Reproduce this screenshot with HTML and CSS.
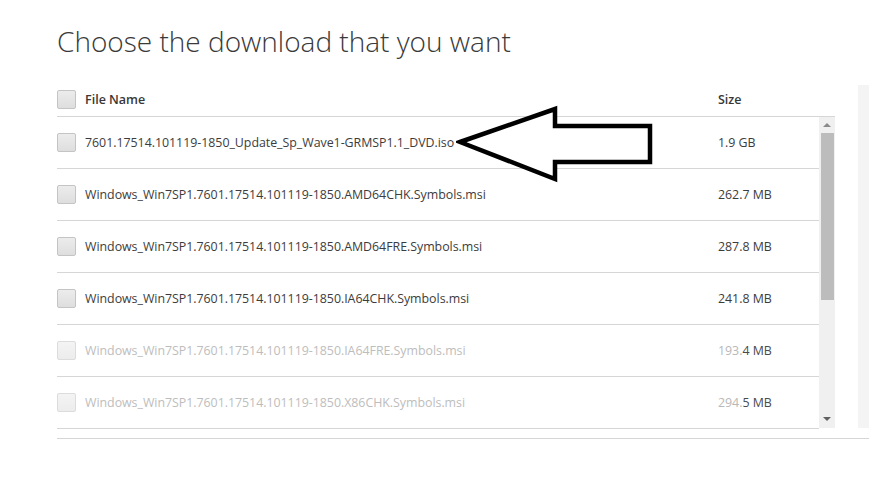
FILE: index.html
```html
<!DOCTYPE html>
<html lang="en">
<head>
<meta charset="utf-8">
<title>Choose the download that you want</title>
<link rel="stylesheet" href="styles.css">
</head>
<body>
<div class="page">
  <h1 class="title">Choose the download that you want</h1>
  <div class="body-row">
    <div class="table">
      <div class="head">
        <div class="cell-name"><span class="box"></span><span class="label">File Name</span></div>
        <div class="cell-size"><span class="label">Size</span></div>
      </div>
      <div class="list">
        <div class="rows">
          <div class="row"><div class="cell-name"><span class="box"></span><span>7601.17514.101119-1850_Update_Sp_Wave1-GRMSP1.1_DVD.iso</span></div><div class="cell-size">1.9 GB</div></div>
          <div class="row"><div class="cell-name"><span class="box"></span><span>Windows_Win7SP1.7601.17514.101119-1850.AMD64CHK.Symbols.msi</span></div><div class="cell-size">262.7 MB</div></div>
          <div class="row"><div class="cell-name"><span class="box"></span><span>Windows_Win7SP1.7601.17514.101119-1850.AMD64FRE.Symbols.msi</span></div><div class="cell-size">287.8 MB</div></div>
          <div class="row"><div class="cell-name"><span class="box"></span><span>Windows_Win7SP1.7601.17514.101119-1850.IA64CHK.Symbols.msi</span></div><div class="cell-size">241.8 MB</div></div>
          <div class="row faded"><div class="cell-name"><span class="box"></span><span>Windows_Win7SP1.7601.17514.101119-1850.IA64FRE.Symbols.msi</span></div><div class="cell-size"><span class="dim">193.</span>4 MB</div></div>
          <div class="row faded"><div class="cell-name"><span class="box"></span><span>Windows_Win7SP1.7601.17514.101119-1850.X86CHK.Symbols.msi</span></div><div class="cell-size"><span class="dim">294.</span>5 MB</div></div>
        </div>
        <div class="scrollbar">
          <span class="arrow-up"></span>
          <span class="thumb"></span>
          <span class="track-rest"></span>
          <span class="arrow-down"></span>
        </div>
      </div>
    </div>
    <div class="side"></div>
  </div>
  <div class="footer-line"></div>
</div>
<svg class="pointer" width="200" height="80" viewBox="0 0 200 80" aria-hidden="true">
  <polygon points="4,37 99,4 99,21 194,21 194,57 99,57 99,74" fill="#fff" stroke="#000" stroke-width="4.5" stroke-linejoin="miter"/>
</svg>
</body>
</html>
```

FILE: styles.css
```css
html, body {
  margin: 0;
  padding: 0;
  background: #fff;
  overflow: hidden;
}
body {
  font-family: "Open Sans", "Noto Sans", sans-serif;
  color: #333;
  position: relative;
  width: 869px;
  height: 495px;
}
.page {
  padding: 22px 0 0 57px;
}
.title {
  margin: 0;
  font-weight: 300;
  font-size: 28px;
  line-height: 38px;
  color: #3a3a3a;
  letter-spacing: 0;
}
.body-row {
  display: flex;
  margin-top: 22px;
  gap: 23px;
}
.table {
  width: 778px;
  flex: none;
}
.head {
  display: flex;
  align-items: center;
  height: 34px;
  border-bottom: 1px solid #d6d6d6;
  font-size: 12.5px;
  font-weight: 600;
}
.head .label {
  color: #383838;
}
.cell-name {
  display: flex;
  align-items: center;
  gap: 9px;
  width: 661px;
  flex: none;
  white-space: nowrap;
}
.cell-size {
  flex: 1;
  white-space: nowrap;
}
.box {
  width: 17px;
  height: 17px;
  border: 1px solid #c4c4c4;
  border-radius: 2px;
  background: linear-gradient(#ececec, #dedede);
  flex: none;
}
.list {
  display: flex;
  height: 311px;
}
.rows {
  flex: 1;
  font-size: 12.4px;
  letter-spacing: -0.03px;
}
.row {
  display: flex;
  align-items: center;
  height: 51px;
  border-bottom: 1px solid #d6d6d6;
  color: #3c3c3c;
}
.row.faded {
  color: #bdbdbd;
}
.row.faded .box {
  border-color: #dcdcdc;
  background: linear-gradient(#f4f4f4, #ececec);
}
.row.faded .cell-size {
  color: #4a4a4a;
}
.row.faded .cell-size .dim {
  color: #b8b8b8;
}
.scrollbar {
  width: 16px;
  display: flex;
  flex-direction: column;
  align-items: center;
  background: #f0f0f0;
  padding: 0 1px;
  box-sizing: border-box;
}
.arrow-up, .arrow-down {
  width: 0;
  height: 0;
  border-left: 4px solid transparent;
  border-right: 4px solid transparent;
  flex: none;
}
.arrow-up {
  border-bottom: 4px solid #8a8a8a;
  margin: 6px 0 6px;
}
.arrow-down {
  border-top: 4px solid #606060;
  margin: 5px 0 7px;
}
.thumb {
  width: 13px;
  height: 167px;
  background: #bcbcbc;
  flex: none;
}
.track-rest {
  flex: 1;
}
.side {
  flex: 1;
  margin-top: 3px;
  height: 343px;
  background: #f4f4f4;
}
.footer-line {
  margin-top: 10px;
  border-top: 1px solid #d6d6d6;
}
.pointer {
  position: absolute;
  left: 456px;
  top: 105px;
}
```
